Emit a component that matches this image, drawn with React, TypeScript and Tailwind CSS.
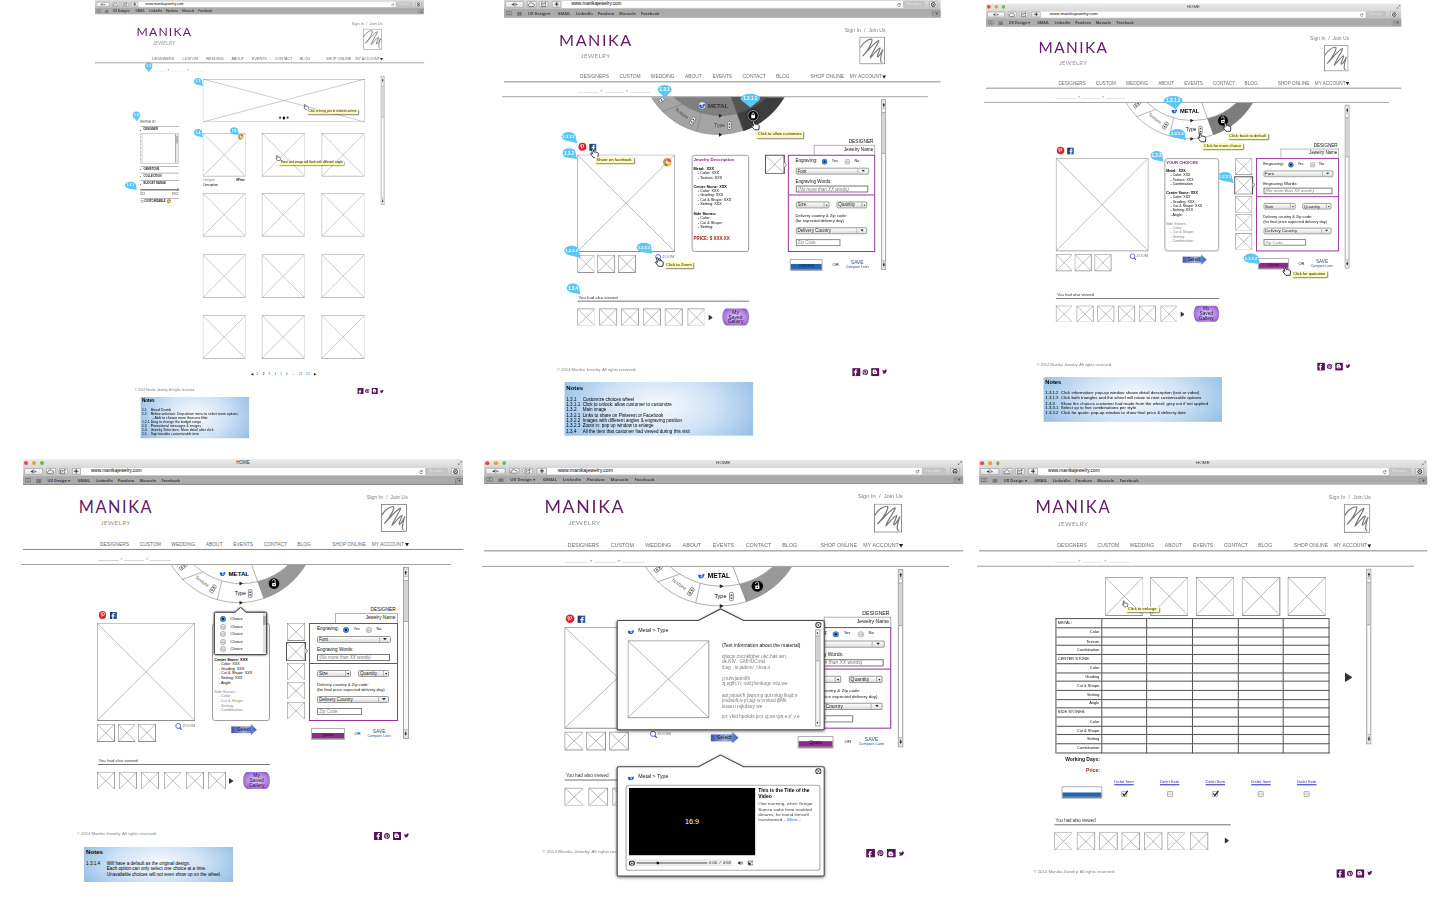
import React from "react";
import {
  FaBloggerB,
  FaFacebookF,
  FaPinterest,
  FaPinterestP,
  FaTwitter,
} from "react-icons/fa";

type Row = [string, string];

/* ---------- small shared drawings ---------- */

function XBox({ className, dark }: { className: string; dark?: boolean }) {
  return (
    <svg className={"shrink-0 " + className} viewBox="0 0 100 100" preserveAspectRatio="none" fill="none">
      <path d="M0 0L100 100M100 0L0 100" stroke="#8e8e8e" strokeWidth="0.6" vectorEffect="non-scaling-stroke" />
      <rect
        width="100"
        height="100"
        stroke={dark ? "#555" : "#8e8e8e"}
        strokeWidth={dark ? 2 : 1.2}
        vectorEffect="non-scaling-stroke"
      />
    </svg>
  );
}

function Play({ className }: { className: string }) {
  return (
    <svg className={"shrink-0 " + className} viewBox="0 0 10 12" preserveAspectRatio="none">
      <path d="M0 0L10 6L0 12Z" fill="#333" />
    </svg>
  );
}

function Wheelie({ className }: { className: string }) {
  return (
    <svg className={"shrink-0 " + className} viewBox="0 0 20 20">
      <circle cx="10" cy="10" r="9.5" fill="#f4e3c4" stroke="#c8b18a" />
      <path d="M10 1A9 9 0 0 1 19 9L13 9.5A4 4 0 0 0 9 6Z" fill="#e2574c" />
      <path d="M19 10A9 9 0 0 1 12 19L10 14A4 4 0 0 0 13.500 10Z" fill="#f0c23c" />
      <path d="M11 19A9 9 0 0 1 2 14L7 12A4 4 0 0 0 10 14Z" fill="#4c9f58" />
      <path d="M1.500 13A9 9 0 0 1 9 1L8.500 6.500A4 4 0 0 0 6.500 11Z" fill="#d8843f" />
    </svg>
  );
}

function BlueMark({ className }: { className: string }) {
  return (
    <svg className={"shrink-0 " + className} viewBox="0 0 12 10">
      <path d="M0 3H4.500L5.500 5.500C6.500 3 8 2.500 11.500 2C11.300 7 8.500 9.500 5.500 9.500C2 9.500 0 7 0 3Z" fill="#1d55d6" />
      <path d="M4.500 6L6 6.500L6.500 4.500L8.500 4.300L7 7.500L5 8Z" fill="#dbe7ff" />
    </svg>
  );
}

/* ---------- browser chrome ---------- */

const toolButton =
  "flex h-[7.6px] items-center justify-center rounded-[1px] border border-[#b5b5b5] bg-gradient-to-b from-[#fafafa] to-[#e2e2e2]";

function Chrome({ titled = true, squeeze = "" }: { titled?: boolean; squeeze?: string }) {
  return (
    <div
      className={
        "h-[25.7px] origin-bottom overflow-hidden rounded-t-[2px] border-b border-[#8d8d8d] bg-gradient-to-b from-[#ececec] via-[#cfcfcf] to-[#b4b4b4] text-[#333] " +
        squeeze
      }
    >
      <div className="flex h-[8px] items-center pl-[1.2px]">
        <div className="flex w-[30px] gap-[3.8px]">
          <i className="size-[3.9px] rounded-full bg-[#e4483f]" />
          <i className="size-[3.9px] rounded-full bg-[#eda032]" />
          <i className="size-[3.9px] rounded-full bg-[#74b341]" />
        </div>
        <div className="w-[377px] text-center text-[4.5px]">{titled && "HOME"}</div>
        <svg className="ml-auto mr-[1.500px] size-[4px]" viewBox="0 0 8 8" fill="none" stroke="#555">
          <path d="M4.500 0.500H7.500V3.500M7.500 0.500L4.500 3.500M3.500 7.500H0.500V4.500M0.500 7.500L3.500 4.500" />
        </svg>
      </div>
      <div className="flex h-[9px] items-center pl-px">
        <div className={toolButton + " w-[18.7px] justify-around"}>
          <svg className="h-[3px] w-[3.4px]" viewBox="0 0 6 6">
            <path d="M6 0L0 3L6 6Z" fill="#444" />
          </svg>
          <i className="h-full w-[0.5px] bg-[#b0b0b0]" />
          <svg className="h-[3px] w-[3.4px]" viewBox="0 0 6 6">
            <path d="M0 0L6 3L0 6Z" fill="#888" />
          </svg>
        </div>
        <div className={toolButton + " ml-[3px] w-[10px]"}>
          <svg className="h-[5.2px] w-[7px] shrink-0" viewBox="0 0 13 9" fill="none" stroke="#333" strokeWidth="1.100">
            <path d="M3 8.500A2.300 2.300 0 0 1 2.500 4A3.500 3.500 0 0 1 9 3A2.800 2.800 0 0 1 10.500 8.500Z" />
          </svg>
        </div>
        <div className={toolButton + " ml-[2.7px] w-[9.6px]"}>
          <svg className="h-[5px] w-[6px] shrink-0" viewBox="0 0 12 10" fill="none" stroke="#333" strokeWidth="1.200">
            <path d="M5 2H1V9.500H9.500V6M4 6.500C4.500 3.500 7 2.500 10.500 2.500M8.500 0.500L11 2.500L8.500 4.500" />
          </svg>
        </div>
        <div className={toolButton + " ml-[3.4px] w-[9.3px]"}>
          <svg className="size-[4.400px] shrink-0" viewBox="0 0 8 8" stroke="#222" strokeWidth="1.600">
            <path d="M4 0V8M0 4H8" />
          </svg>
        </div>
        <div className="flex h-[7.2px] w-[344px] items-center bg-white pl-[10px] pr-[2px] pt-[0.500px]">
          <span className="text-[4.7px] text-black">www.manikajewelry.com</span>
          <svg className="ml-auto size-[4px]" viewBox="0 0 8 8" fill="none" stroke="#333">
            <path d="M6.500 2.500A3 3 0 1 0 7 5M6.800 0.300V2.800H4.500" />
          </svg>
        </div>
        <div className="flex h-[7px] w-[22.7px] items-center justify-center rounded-[1px] bg-[#c4c4c4] text-[4.4px] text-[#e0e0e0]">
          Reader
        </div>
        <div className={toolButton + " ml-[3.6px] w-[9px]"}>
          <svg className="size-[5.200px] shrink-0" viewBox="0 0 10 10" fill="none" stroke="#222">
            <circle cx="5" cy="5" r="3.800" strokeWidth="1.800" />
            <circle cx="5" cy="5" r="0.800" fill="#333" />
          </svg>
        </div>
      </div>
      <div className="flex h-[8.700px] items-center bg-[#ababab] pl-[2px] pt-[0.500px] font-['Open_Sans','Noto_Sans',sans-serif] text-[3.9px] font-bold text-[#444]">
        <svg className="h-[4.4px] w-[6.2px]" viewBox="0 0 12 8" fill="none" stroke="#555">
          <path d="M0.500 0.500H11.500V7.500H0.500ZM6 0.500V7.500" />
        </svg>
        <svg className="ml-[4.800px] h-[4px] w-[5.4px]" viewBox="0 0 12 8" fill="none" stroke="#555">
          <path d="M0 0.700H12M0 3H12M0 5.300H12M0 7.500H12M4 0V8M8 0V8" />
        </svg>
        <span className="ml-[5.800px] w-[30px]">UX Design ▾</span>
        <span className="w-[18.3px]">GMAIL</span>
        <span className="w-[22px]">LinkedIn</span>
        <span className="w-[21.7px]">Pandora</span>
        <span className="w-[22px]">Monocle</span>
        <span>Facebook</span>
        <span className="ml-auto flex h-[6px] w-[8.7px] items-center justify-center rounded-tl-[2px] border-l border-t border-[#888] bg-[#a0a0a0] text-[5px]">
          +
        </span>
      </div>
    </div>
  );
}

/* ---------- site header ---------- */

const nav: Row[] = [
  ["DESIGNERS", "w-[39.7px]"],
  ["CUSTOM", "w-[31.6px]"],
  ["WEDDING", "w-[34.4px]"],
  ["ABOUT", "w-[27.6px]"],
  ["EVENTS", "w-[30.4px]"],
  ["CONTACT", "w-[33.6px]"],
  ["BLOG", "w-[35px]"],
  ["SHOP ONLINE", "w-[39.4px]"],
];

function Header({ rule = true }: { rule?: boolean }) {
  return (
    <>
      <div className="flex h-[54px] justify-between">
        <div className="pl-[55.500px] pt-[14px]">
          <div className="h-[16px] font-['Lato',sans-serif] text-[16.3px] leading-[16px] tracking-[1.55px] text-[#641a66]">
            MANIKA
          </div>
          <div className="mt-[5.400px] pl-[22px] font-['Lato',sans-serif] text-[6.2px] leading-[6.500px] tracking-[0.4px] text-[#8f8f8f]">
            JEWELRY
          </div>
        </div>
        <div className="flex flex-col items-end pr-[56.500px] pt-[10.500px]">
          <div className="-mr-[1px] h-[9px] whitespace-pre text-[5.25px] leading-[5.800px] text-[#808080]">Sign In  /  Join Us</div>
          <svg className="h-[27.8px] w-[26px]" viewBox="0 0 26 28" fill="none" stroke="#77777c">
            <rect x="0.4" y="0.4" width="25.200" height="27.200" strokeWidth="0.8" />
            <path
              d="M1 11C3 7 8 2.500 12 2.500C15 2.500 9 14 3.500 19.500C8 15 15 6 19.500 4C21 4.500 12 17 11 21.500C14 19 18 12.500 21 11.500C21.500 13 17 20 18.500 20.500C20.500 20 23 14.500 23.800 13C22.500 17 21.500 20 21.500 24C21.500 26 22.500 25.500 22.800 26.500"
              strokeWidth="1.150"
              strokeLinejoin="round"
            />
          </svg>
        </div>
      </div>
      <div className="flex h-[11.8px] items-center border-b border-[#8b8b8b] pl-[76.7px] pt-[2.600px] text-[4.95px] text-[#6c6c6c]">
        {nav.map(([label, width]) => (
          <span key={label} className={"whitespace-nowrap " + width}>
            {label}
          </span>
        ))}
        <span className="w-[33px] whitespace-nowrap text-[4.9px]">MY ACCOUNT</span>
        <svg className="-mt-[0.500px] h-[3.400px] w-[4px]" viewBox="0 0 6 5" preserveAspectRatio="none">
          <path d="M0 0H6L3 5Z" fill="#222" />
        </svg>
      </div>
      <div
        className={
          "-ml-[2px] flex h-[14.6px] w-[429.4px] items-center border-b pl-[76.4px] pt-[4px] text-[4px] text-[#777] " +
          (rule ? "border-[#a2a2a2]" : "border-transparent")
        }
      >
        <svg className="mt-[2.600px] h-[1px] w-[21.500px]" viewBox="0 0 21 1" preserveAspectRatio="none">
          <path d="M0 0.500H21" stroke="#aaa" strokeWidth="0.5" />
        </svg>
        <span className="w-[4.700px] text-center">&gt;</span>
        <svg className="mt-[2.600px] h-[1px] w-[20.500px]" viewBox="0 0 21 1" preserveAspectRatio="none">
          <path d="M0 0.500H21" stroke="#aaa" strokeWidth="0.5" />
        </svg>
        <span className="w-[5.500px] text-center">&gt;</span>
        <svg className="mt-[2.600px] h-[1px] w-[21px]" viewBox="0 0 21 1" preserveAspectRatio="none">
          <path d="M0 0.500H21" stroke="#aaa" strokeWidth="0.5" />
        </svg>
      </div>
    </>
  );
}

function Scrollbar({ className = "h-[172px]" }: { className?: string }) {
  return (
    <div className={"mt-[2.4px] flex w-[5.4px] shrink-0 flex-col border border-[#a5a5a5] bg-[#f9f9f9] " + className}>
      <svg className="h-[9px] w-full bg-[#e2e2e2]" viewBox="0 0 5 9" preserveAspectRatio="none">
        <path d="M2.500 2.500L4.300 5H3.100V6.800H1.900V5H0.700Z" fill="#222" />
        <path d="M0 8.700H5" stroke="#888" strokeWidth="0.6" />
      </svg>
      <div className="mt-[2.500px] h-[42.500px] border-y border-[#aaa] bg-[#d4d4d4]" />
      <svg className="mt-auto h-[9px] w-full bg-[#e2e2e2]" viewBox="0 0 5 9" preserveAspectRatio="none">
        <path d="M2.500 6.800L4.300 4.300H3.100V2.500H1.900V4.300H0.700Z" fill="#222" />
        <path d="M0 0.300H5" stroke="#888" strokeWidth="0.6" />
      </svg>
    </div>
  );
}

function Footer({ className }: { className: string }) {
  return (
    <div className={"flex h-[8px] w-[385.600px] items-start pl-[53.400px] " + className}>
      <span className="pt-[0.500px] text-[4.2px] leading-[4.400px] text-[#7e7e7e]">© 2014 Manika Jewelry. All rights reserved.</span>
      <div className="ml-auto flex items-center text-[#581257]">
        <div className="flex size-[8px] items-end justify-end bg-[#581257] pr-[0.8px]">
          <FaFacebookF className="size-[6.500px] text-white" />
        </div>
        <FaPinterest className="ml-[2.600px] size-[6px]" />
        <div className="ml-[2.500px] flex size-[8px] items-center justify-center bg-[#581257]">
          <FaBloggerB className="size-[5.500px] text-white" />
        </div>
        <FaTwitter className="ml-[3px] size-[5px]" />
      </div>
    </div>
  );
}

function Notes({ rows, className, code }: { rows: Row[]; className: string; code: string }) {
  return (
    <div
      className={
        "ml-[61.2px] bg-[radial-gradient(ellipse_60%_110%_at_50%_45%,#f6faff_0%,#cfe2f6_50%,#90bbe5_100%)] pl-[1.600px] pt-[2.600px] text-black " +
        className
      }
    >
      <div className="mb-[5.600px] text-[6.100px] font-bold leading-[6.200px]">Notes</div>
      {rows.map(([id, text], i) => (
        <div key={i} className="flex whitespace-pre text-[4.6px] leading-[5.350px]">
          <span className={"shrink-0 " + code}>{id}</span>
          <span>{text}</span>
        </div>
      ))}
    </div>
  );
}

/* ---------- customize wheel ---------- */

function Stepper({ t }: { t: string }) {
  return (
    <g transform={t}>
      <rect x="-1.800" y="-4" width="3.600" height="8" rx="1" fill="#f2f2f2" stroke="#555" strokeWidth="0.6" />
      <path d="M-1.100 -0.900L0 -2.600L1.100 -0.900ZM-1.100 0.900L0 2.600L1.100 0.900Z" fill="#333" />
    </g>
  );
}

function Wheel({ locked, sector }: { locked?: boolean; sector: string }) {
  const line = { stroke: "#808080", strokeWidth: 0.6, fill: "none" };
  return (
    <svg className="h-[42px] w-[380px]" viewBox="0 105.7 380 42">
      <circle cx="215.500" cy="64.800" r="78.500" {...line} fill={locked ? "#a4a4a4" : "#fff"} />
      <circle cx="218.200" cy="55.600" r="68.700" {...line} fill={locked ? "#7f7f7f" : "#fff"} />
      {locked && <path d="M228.700 105.700L241 140.100A78.500 78.500 0 0 0 282.400 105.700Z" fill="#3d3d3d" />}
      {locked && <path d="M228.700 105.700L234.700 122A68.700 68.700 0 0 0 265.400 105.700Z" fill="#555" />}
      {!locked && (
        <path
          d="M234.700 122.300L241 139.300A78.500 78.500 0 0 0 282.400 105.700L265.400 105.700A68.700 68.700 0 0 1 234.700 122.300Z"
          fill={sector}
        />
      )}
      <path d="M179.500 112.700L159 120.300M198.700 121.500L194.400 140.300M228.700 105.700L234.700 122.300L241 139.300" {...line} />
      <Stepper t="translate(160 107.500) rotate(50)" />
      <Stepper t="translate(190 129.500) rotate(32)" />
      <Stepper t="translate(227.200 134.300)" />
      <g transform="translate(196.600 111.600)">
        {locked && <circle cx="3" cy="2.500" r="3.200" fill="#e6ecf8" />}
        <path d="M0 1.600H2.200L2.800 2.900C3.300 1.600 4 1.300 5.900 1C5.800 3.700 4.300 5.200 2.800 5.200C1 5.200 0 3.600 0 1.600Z" fill="#1d55d6" />
        <path d="M2.300 3.200L3 3.500L3.300 2.400L4.300 2.300L3.600 4L2.500 4.200Z" fill="#dbe7ff" />
      </g>
      <g fontFamily="'Liberation Sans', sans-serif">
        <text x="205.500" y="116.300" fontSize="6.100" fontWeight="700" fill={locked ? "#333" : "#000"}>
          METAL
        </text>
        <text x="211.700" y="135.700" fontSize="5.100" fill={locked ? "#444" : "#000"}>
          Type
        </text>
        <text transform="translate(171.600 118.500) rotate(37)" fontSize="4.900" fill={locked ? "#444" : "#666"}>
          Texture
        </text>
      </g>
      <path d="M216.500 122.300L220 124.300L216.500 126.300ZM216.500 141.500L220 143.500L216.500 145.500Z" fill="#222" />
      <circle cx="251" cy="124.300" r="5.300" fill="#000" stroke={locked ? "#fff" : "none"} strokeWidth="0.7" />
      {locked && <circle cx="251" cy="124.300" r="6" fill="none" stroke="#111" strokeWidth="0.7" />}
      <rect x="249.100" y="123.700" width="3.800" height="3.200" rx="0.4" fill="#fff" />
      <path
        d={locked ? "M249.900 124V122.600A1.100 1.100 0 0 1 252.100 122.600V124" : "M252.200 124V121.800A1.300 1.300 0 0 0 249.600 121.200L249.300 122.100"}
        fill="none"
        stroke="#fff"
        strokeWidth="0.8"
      />
      {!locked && <circle cx="251" cy="125.300" r="0.700" fill="#000" />}
    </svg>
  );
}

/* ---------- form controls ---------- */

function Radio({ on }: { on?: boolean }) {
  return (
    <svg className="size-[6px] shrink-0" viewBox="0 0 12 12">
      <circle cx="6" cy="6" r="5.400" fill={on ? "#4b97ea" : "#e3e3e3"} stroke={on ? "#2f4f8a" : "#8a8a8a"} strokeWidth="1" />
      {on ? <circle cx="6" cy="6" r="2.300" fill="#0b1b3a" /> : <path d="M2 6.500H10" stroke="#aaa" strokeWidth="1.500" />}
    </svg>
  );
}

function Select({ label, className, small }: { label: string; className: string; small?: boolean }) {
  return (
    <div
      className={
        "flex h-[6.800px] items-center rounded-[1.4px] border border-[#9a9a9a] bg-gradient-to-b from-white to-[#dcdcdc] pl-px text-[4.6px] text-[#222] " +
        className
      }
    >
      <span className="h-[5px] leading-[5px]">{label}</span>
      <span
        className={
          "ml-auto flex h-full items-center justify-center border-l border-[#b5b5b5] " + (small ? "w-[4.500px]" : "w-[10.500px]")
        }
      >
        <svg className={small ? "h-[1.800px] w-[2.400px]" : "h-[2.200px] w-[3.800px]"} viewBox="0 0 6 4" preserveAspectRatio="none">
          <path d="M0 0H6L3 4Z" fill="#222" />
        </svg>
      </span>
    </div>
  );
}

function ActionButton({ label, tone, className }: { label?: string; tone: "blue" | "purple"; className: string }) {
  return (
    <div className={"flex shrink-0 flex-col justify-end rounded-[0.8px] border border-[#b0b0b0] bg-white " + className}>
      <div
        className={
          "flex h-[5.400px] items-center justify-center border-b border-[#8a8a8a] text-[4.300px] leading-[4px] " +
          (tone === "blue" ? "bg-[#2464b4] text-[#13294a]" : "bg-[#93288f] text-[#2a062c]")
        }
      >
        {label}
      </div>
    </div>
  );
}

function Order({ locked }: { locked?: boolean }) {
  return (
    <div className="ml-[3px] w-[88.7px]">
      <div className="h-[6.300px] pr-[2px] text-right text-[4.800px] leading-[5px]">DESIGNER</div>
      <div className="ml-[26px] flex h-[9.700px] items-center justify-end border-x border-t border-[#b5b5b5] pr-[1.300px] text-[4.7px]">
        Jewelry Name
      </div>
      <div className="h-[97.600px] border border-[#97319b] pl-[7px]">
        <div className="-ml-[7px] h-[39.600px] border-b border-[#97319b] pl-[7px] pt-[2.100px]">
          <div className="flex h-[7px] items-center">
            <span className="w-[26.200px] text-[4.600px]">Engraving:</span>
            <Radio on />
            <span className="ml-[4.400px] w-[12.500px] text-[3.800px]">Yes</span>
            <Radio />
            <span className="ml-[4.400px] text-[3.800px]">No</span>
          </div>
          <Select label="Font" className="mt-[2.700px] w-[74px]" />
          <div className="mt-[4px] text-[4.600px] leading-[5px]">Engraving Words:</div>
          <div className="mt-[2.100px] flex h-[7px] w-[73.300px] items-center border border-[#777] pl-[1.500px] text-[4.550px] text-[#777]">
            <span className="h-[5px] italic leading-[5px]">(No more than XX words)</span>
          </div>
        </div>
        <div className="flex pt-[6.700px]">
          <Select small label="Size" className="w-[34px]" />
          <Select small label="Quantity" className="ml-[7px] w-[31px]" />
        </div>
        <div className="mt-[5px] whitespace-nowrap text-[4.150px] leading-[5px]">
          Delivery country &amp; Zip code:
          <br />
          {locked ? "(for expected delivery day)" : "(for final price expected delivery day)"}
        </div>
        <Select label="Delivery Country" className="mt-[3.900px] w-[72.500px]" />
        <div className="mt-[5.100px] flex h-[7px] w-[45px] items-center border border-[#888] pl-[1.300px] text-[4.500px] text-[#888]">
          <span className="h-[5px] leading-[5px]">Zip Code</span>
        </div>
      </div>
      <div className="mt-[7px] flex items-center pl-[2.300px]">
        <ActionButton label={locked ? "ORDER" : "Quote"} tone={locked ? "blue" : "purple"} className="h-[12px] w-[33.500px]" />
        <span className="ml-[9.500px] text-[4.200px]">OR</span>
        <div className="ml-[7px] text-center text-[#1f5299]">
          <div className="text-[4.900px] leading-[5.200px]">SAVE</div>
          <div className="whitespace-nowrap text-[3.500px] leading-[4.200px]">Compare Later</div>
        </div>
      </div>
    </div>
  );
}

/* ---------- product page ---------- */

type Cover = "none" | "top" | "all";

const lockedSpec = ["Metal:  XXX", "-Color: XXX", "-Texture: XXX", "", "Center Stone: XXX", "-Color: XXX", "-Grading: XXX", "-Cut & Shape: XXX", "-Setting: XXX", "", "Side Stones:", "-Color:", "-Cut & Shape:", "-Setting:"];
const choiceSpec = ["Metal:  XXX", "-Color: XXX", "-Texture: XXX", "-Combination", "", "Center Stone: XXX", "-Color: XXX", "-Grading: XXX", "-Cut & Shape: XXX", "-Setting: XXX", "-Angle:", "", "Side Stones:", "-Color:", "-Cut & Shape:", "-Setting:", "-Combination:"];

/* Lines that lie behind an open popup are left blank. */
function Description({ locked, cover }: { locked?: boolean; cover: Cover }) {
  const lines = locked ? lockedSpec : choiceSpec;
  return (
    <div className="h-[97.600px] rounded-[3px] border border-[#9c9c9c] pl-[0.900px] pt-[1.300px]">
      <div className="h-[5px] whitespace-nowrap text-[4.350px] font-bold leading-[5px] text-[#8f2393]">
        {cover === "none" && (locked ? "Jewelry Description" : "YOUR CHOICES")}
      </div>
      <div className="mt-[4.200px]">
        {lines.map((line, i) => {
          const sub = line.startsWith("-");
          const grey = !locked && i > 11;
          const shown = cover === "none" || (cover === "top" && i > 4);
          return (
            <div
              key={i}
              className={
                "h-[4.620px] whitespace-pre text-[3.800px] leading-[4.620px] " +
                (sub ? "pl-[4.600px] " : grey ? "" : "font-bold ") +
                (grey ? "text-[#858585]" : "text-black")
              }
            >
              {shown && (sub ? "- " + line.slice(1) : line)}
            </div>
          );
        })}
      </div>
      {locked && <div className="mt-[6.300px] text-[4.500px] font-bold leading-[5px] text-[#b01818]">PRICE: $ XXX.XX</div>}
    </div>
  );
}

function Viewed({ count, className, half }: { count: number; className: string; half?: boolean }) {
  return (
    <div className={className}>
      <div className="ml-[74.400px] h-[6.400px] w-[172.300px] border-b border-[#777] pl-[0.800px] text-[4.300px] leading-[5px] text-[#333]">
        You had also viewed
      </div>
      <div className="mt-[6.800px] flex items-center pl-[73.700px]">
        <div className="flex gap-[4.400px]">
          {Array.from({ length: count }, (_, i) => (
            <XBox key={i} className="h-[17.500px] w-[17.800px]" />
          ))}
        </div>
        {half ? null : count === 6 ? (
          <>
            <Play className="ml-[3.300px] h-[6px] w-[4.600px]" />
            <div className="ml-[9.500px] flex h-[17.800px] w-[27px] flex-col items-center rounded-[4.500px/8.500px] bg-[radial-gradient(ellipse_at_50%_50%,#d6bdf4_15%,#a470d8_70%,#6c35a6_100%)] pt-[0.900px] text-[5px] leading-[5.300px] text-[#241038]">
              <span>My</span>
              <span>Saved</span>
              <span>Gallery</span>
            </div>
          </>
        ) : (
          <Play className="ml-[16px] h-[6px] w-[4.800px]" />
        )}
      </div>
    </div>
  );
}

type ProductProps = {
  locked?: boolean;
  titled?: boolean;
  squeeze?: string;
  sector?: string;
  late?: boolean;
  cover?: Cover;
  children?: React.ReactNode;
};

function Product({ locked, titled, squeeze, sector = "#989898", late, cover = "none", children }: ProductProps) {
  return (
    <>
      <Chrome titled={titled} squeeze={squeeze} />
      <Header />
      <div className="flex h-[176.200px] items-start">
        <div className="w-[380px]">
          <Wheel locked={locked} sector={sector} />
          <div className="flex pl-[73.700px]">
            <div className="w-[98px]">
              <div className="flex h-[16px] items-center pl-[1.600px]">
                <div className="flex size-[7.600px] items-center justify-center rounded-full bg-[#d8232a]">
                  <FaPinterestP className="size-[5.400px] text-white" />
                </div>
                <div className="ml-[3.600px] flex size-[7px] items-end justify-end bg-gradient-to-r from-[#1d3567] to-[#3d62a8] pr-[0.600px]">
                  <FaFacebookF className="size-[6px] text-white" />
                </div>
              </div>
              <XBox className="h-[97.600px] w-[98px]" />
              <div className="mt-[3.400px] flex items-start gap-[2.900px]">
                <XBox className="h-[17.600px] w-[17.700px]" />
                <XBox className="h-[17.600px] w-[17.700px]" />
                <XBox className="h-[17.600px] w-[17.700px]" />
                <div className="-mt-[1.200px] ml-auto flex items-center text-[4.200px] text-[#777]">
                  <svg className="mr-[0.600px] size-[7px]" viewBox="0 0 13 13" fill="none" stroke="#3338d8">
                    <circle cx="6" cy="5.500" r="4.600" strokeWidth="1.400" />
                    <path d="M9 9L12.500 12.500" strokeWidth="2" />
                  </svg>
                  ZOOM
                </div>
              </div>
            </div>
            <div className="ml-[17.300px] w-[57.700px] pt-[16px]">
              <Description locked={locked} cover={cover} />
              {!locked && (
                <div className="relative ml-[18.700px] mt-[3.300px] flex h-[11.500px] w-[26px] items-center pl-[6px] pt-[0.600px] text-[4.900px]">
                  <svg className="absolute inset-0 size-full" viewBox="0 0 26 11.500">
                    <defs>
                      <linearGradient id="arrow">
                        <stop offset="0" stopColor="#3a4fae" />
                        <stop offset="0.500" stopColor="#9db4e6" />
                        <stop offset="1" stopColor="#3a5cc0" />
                      </linearGradient>
                    </defs>
                    <path d="M0.300 2.500H20V0.400L25.700 5.700L20 11V9H0.300Z" fill="url(#arrow)" stroke="#6a7fc8" strokeWidth="0.300" />
                  </svg>
                  <span className="relative">Select</span>
                </div>
              )}
            </div>
            <div className="ml-[16.300px] flex w-[19.700px] flex-col items-center pt-[16px]">
              {!locked && <XBox className="mb-[1.200px] h-[17.500px] w-[18px]" />}
              <div className="relative">
                <XBox dark className="h-[19.300px] w-[19.700px]" />
                <svg className="absolute -right-[2.400px] top-[6.600px] h-[6px] w-[3px]" viewBox="0 0 3 6">
                  <path d="M0.300 0.200L2.700 3L0.300 5.800" fill="#fff" stroke="#555" strokeWidth="0.700" />
                </svg>
              </div>
              {!locked && (
                <>
                  <XBox className="mt-[1.500px] h-[17.500px] w-[18px]" />
                  <XBox className="mt-[1.600px] h-[17.500px] w-[18px]" />
                  <XBox className="mt-[2.700px] h-[17.500px] w-[18px]" />
                </>
              )}
            </div>
            <Order locked={locked} />
          </div>
        </div>
        <Scrollbar />
      </div>
      <Viewed count={cover === "all" ? 3 : 6} half={cover === "all"} className={late ? "mt-[23.200px]" : "mt-[17.200px]"} />
      <Footer className="mt-[42.200px]" />
      {children}
    </>
  );
}

/* ---------- popups over a product page ---------- */

function Close() {
  return (
    <svg className="size-[6.200px]" viewBox="0 0 10 10" fill="none" stroke="#333">
      <circle cx="5" cy="5" r="4" strokeWidth="1.500" fill="#fff" />
      <path d="M3.500 3.500L6.500 6.500M6.500 3.500L3.500 6.500" strokeWidth="1.300" />
    </svg>
  );
}

function Popup({ className, children }: { className: string; children: React.ReactNode }) {
  return (
    <div className={"absolute left-[121.800px] w-[190.700px] " + className}>
      <svg className="absolute inset-x-0 top-0 h-[117.500px] w-full overflow-visible drop-shadow-[0_1px_1.500px_rgba(0,0,0,0.6)]" viewBox="0 0 190.700 117.500">
        <path
          d="M1.500 11.600H75L95.200 0.500L116.300 11.600H189.200Q190.400 11.600 190.400 12.800V115.900Q190.400 117.100 189.200 117.100H1.500Q0.300 117.100 0.300 115.900V12.800Q0.300 11.600 1.500 11.600Z"
          fill="#fff"
          stroke="#4a4a4a"
          strokeWidth="1"
        />
      </svg>
      <div className="relative h-[117px] pt-[12.800px]">{children}</div>
    </div>
  );
}

function PopupTitle() {
  return (
    <div className="flex items-start justify-between pl-[10.500px] pr-[2.300px]">
      <div className="flex items-center pt-[7.300px] text-[4.850px]">
        <BlueMark className="mr-[3.300px] h-[5px] w-[6px]" />
        Metal &gt; Type
      </div>
      <Close />
    </div>
  );
}

const filler = ["djiocjn,zxcnkfgher ukc.has am,", "dk.KIV.  GMHUCmkl", "il;ag  ;io.jadvm/ ,l;ksa.n", "", "j;nuhvjaomlfb", "zj;ogfh,'n; mkl;jfvmkogv mlu;we", "", "aoi;jvjouk'h jiwpur;g qui;mktg lksjd;n", "jmdisofi;iv jrl;agl w;vmksd jl|Mk", "kusa.n mjkdsuy we", "", "joi; vkid hpokds jo;s cj;oa vjoi;e p',v.e"];

function TextPopup() {
  return (
    <Popup className="top-[146.200px]">
      <PopupTitle />
      <div className="flex pl-[10.700px] pt-[6.200px]">
        <XBox className="h-[74.600px] w-[74.700px]" />
        <div className="ml-[11.300px] w-[84px] pt-[1.600px]">
          <div className="mb-[5.200px] whitespace-nowrap text-[4.500px] leading-[5.350px]">(Text information about the material)</div>
          {filler.map((t, i) => (
            <div key={i} className="h-[5.350px] whitespace-pre text-[4.400px] leading-[5.350px] text-[#7c7c7c]">
              {t}
            </div>
          ))}
        </div>
        <div className="-mt-[11px] ml-[1.800px] flex h-[94px] w-[4.300px] flex-col border border-[#b0b0b0] bg-[#f4f4f4]">
          <svg className="h-[5px] w-full" viewBox="0 0 4 5" preserveAspectRatio="none"><path d="M0.500 3.500L2 1.500L3.500 3.500Z" fill="#222" /></svg>
          <div className="h-[24.500px] border-y border-[#aaa] bg-[#cfcfcf]" />
          <svg className="mt-auto h-[5px] w-full" viewBox="0 0 4 5" preserveAspectRatio="none"><path d="M0.500 1.500L2 3.500L3.500 1.500Z" fill="#222" /></svg>
        </div>
      </div>
    </Popup>
  );
}

function VideoPopup() {
  return (
    <Popup className="top-[287.300px]">
      <PopupTitle />
      <div className="ml-[8px] mt-[3.200px] flex h-[83px] w-[179.300px] rounded-[3px] border border-[#aaa] pl-[2.300px] pt-[2.700px]">
        <div className="w-[116px]">
          <div className="flex h-[65.200px] items-center justify-center bg-black text-[6.600px] text-white">16:9</div>
          <div className="mt-[3.300px] flex h-[7.600px] items-center">
            <div className="flex h-full w-[95px] items-center rounded-full bg-[#ececec] text-[3.800px] text-[#333]">
              <svg className="size-[5.600px] shrink-0" viewBox="0 0 10 10">
                <circle cx="5" cy="5" r="4" fill="#fff" stroke="#222" strokeWidth="2" />
                <path d="M4 3L7 5L4 7Z" fill="#222" />
              </svg>
              <svg className="ml-px h-[3px] w-[65.500px] shrink-0" viewBox="0 0 65.500 3">
                <path d="M0 1.500H65.500" stroke="#444" strokeWidth="0.900" />
                <rect x="18.500" y="0.200" width="2.200" height="2.600" fill="#111" />
              </svg>
              <span className="ml-[1.500px] whitespace-nowrap">0:00 &nbsp;/ &nbsp;4:68</span>
            </div>
            <svg className="ml-[5px] h-[5px] w-[5.600px]" viewBox="0 0 11 10" fill="none" stroke="#333">
              <path d="M0 3.500H2L5 1V9L2 6.500H0Z" fill="#333" stroke="none" />
              <path d="M6.500 3.500Q7.500 5 6.500 6.500M8 2Q10.500 5 8 8" />
            </svg>
            <svg className="ml-[3.200px] h-[5px] w-[5.600px]" viewBox="0 0 11 10" fill="none" stroke="#222" strokeWidth="1.400">
              <rect x="0.800" y="1" width="9.400" height="8" />
              <path d="M1 5H5V9Z" fill="#222" />
              <path d="M6.500 4L9 2" />
            </svg>
          </div>
        </div>
        <div className="ml-[2.700px] text-[4.150px] leading-[5.250px] text-[#444]">
          <div className="mb-[0.600px] text-[4.600px] font-bold leading-[5.900px] text-black">
            This is the Title of the
            <br />
            Video
          </div>
          One morning, when Gregor
          <br />
          Samsa woke from troubled
          <br />
          dreams, he found himself
          <br />
          transformed... <span className="text-[#1565d8]">More...</span>
        </div>
      </div>
    </Popup>
  );
}

function ChoicePopup() {
  return (
    <div className="absolute left-[190.700px] top-[147.800px] w-[53px]">
      <svg className="absolute inset-0 h-[48px] w-[53px] overflow-visible drop-shadow-[0_0.800px_1px_rgba(0,0,0,0.7)]" viewBox="0 0 53 48">
        <path
          d="M1.500 5.300H21L26.500 0.500L32 5.300H51.500Q52.600 5.300 52.600 6.400V46.500Q52.600 47.600 51.500 47.600H1.500Q0.400 47.600 0.400 46.500V6.400Q0.400 5.300 1.500 5.300Z"
          fill="#fff"
          stroke="#444"
        />
      </svg>
      <div className="relative flex h-[48px] pl-[6.200px] pt-[8.300px]">
        <div className="flex flex-col">
          {[0, 1, 2, 3, 4].map((n) => (
            <div key={n} className="flex h-[7.650px] items-center gap-[4.200px] text-[4px]">
              <Radio on={n === 0} />
              Choice
            </div>
          ))}
        </div>
        <div className="-mt-[1.800px] ml-auto mr-[1px] h-[40px] w-[3.400px] bg-[#dedede] pt-[3px]">
          <div className="h-[9px] bg-[#a9a9a9]" />
        </div>
      </div>
    </div>
  );
}

/* ---------- catalogue page ---------- */

function Filter({ mark, label, className }: { mark: string; label: string; className: string }) {
  return (
    <div className={"flex items-center border-t border-[#a0a0a0] text-[3.700px] font-bold text-[#222] " + className}>
      <span className="w-[4.300px] text-[3px]">{mark}</span>
      {label}
    </div>
  );
}

const pages: Row[] = [
  ["◀", "text-black"],
  ["1", "text-[#2b7fd0]"],
  ["2", "text-black"],
  ["3", "text-[#2b7fd0]"],
  ["4", "text-[#2b7fd0]"],
  ["5", "text-[#2b7fd0]"],
  ["6", "text-[#2b7fd0]"],
  ["...", "text-[#2b7fd0]"],
  ["21", "text-[#2b7fd0]"],
  ["22", "text-[#2b7fd0]"],
  ["▶", "text-black"],
];

function CardRow({ className }: { className: string }) {
  return (
    <div className={"flex " + className}>
      <XBox className="h-[57.800px] w-[57.500px]" />
      <XBox className="ml-[21.400px] h-[57.800px] w-[57.500px]" />
      <XBox className="ml-[22.700px] h-[57.800px] w-[57.500px]" />
    </div>
  );
}

function Catalogue() {
  return (
    <>
      <Chrome titled={false} />
      <Header rule={false} />
      <div className="flex h-[393.500px] items-start">
        <div className="ml-[60.600px] w-[51px] pt-[60px] text-[#333]">
          <div className="h-[8.700px] text-[4px] leading-[6px] text-[#555]">REFINE BY</div>
          <Filter mark="▴" label="DESIGNER" className="h-[9.700px]" />
          <div className="flex h-[40.600px] justify-between border border-[#c0c0c0]">
            <svg className="-ml-[2px] h-full w-[4px]" viewBox="0 0 4 40" preserveAspectRatio="none" fill="#fff" stroke="#aaa" strokeWidth="0.5">
              {[0, 1, 2, 3, 4, 5, 6, 7].map((n) => (
                <rect key={n} x="0.500" y={0.6 + n * 4.95} width="3" height="3.600" />
              ))}
            </svg>
            <div className="w-[4px] border-l border-[#999] bg-[#e6e6e6] pt-[3px]">
              <div className="h-[10px] bg-[#b8b8b8]" />
            </div>
          </div>
          <Filter mark="▾" label="GEMSTONE" className="mt-[3px] h-[8.600px]" />
          <Filter mark="▴" label="COLLECTION" className="h-[10.700px]" />
          <Filter mark="▾" label="BUDGET RANGE" className="h-[9px]" />
          <div className="mt-[1.400px] flex h-[3.600px] items-center justify-between bg-[linear-gradient(#555,#555)] bg-[length:100%_1.500px] bg-center bg-no-repeat">
            <i className="h-full w-[1.500px] bg-[#7a7350]" />
            <i className="h-full w-[1.500px] bg-[#7a7350]" />
          </div>
          <div className="mt-[2.500px] flex h-[7px] justify-between text-[3.400px] text-[#555]">
            <span>$XX</span>
            <span>$XXX</span>
          </div>
          <div className="flex h-[8px] items-center border-t border-[#a0a0a0] text-[3.600px] font-bold text-[#222]">
            <svg className="mr-[1.300px] size-[4px]" viewBox="0 0 8 8">
              <rect x="1" y="1" width="6" height="6" fill="#fff" stroke="#333" />
            </svg>
            CUSTOMIZABLE
            <Wheelie className="ml-[1.600px] size-[6px]" />
          </div>
        </div>
        <div className="ml-[32.300px] w-[217.100px] pt-[5.800px]">
          <div className="relative">
            <XBox className="h-[57.300px] w-[217.100px]" />
            <div className="absolute bottom-[3.500px] left-[102.300px] flex items-center gap-[1.700px]">
              <i className="size-[2.800px] rounded-full bg-[#444]" />
              <i className="size-[3.600px] rounded-full bg-black" />
              <i className="size-[2.800px] rounded-full bg-[#444]" />
            </div>
          </div>
          <div className="relative mt-[14.600px]">
            <CardRow className="" />
            <Wheelie className="absolute left-[47.500px] top-[1.500px] size-[8px]" />
          </div>
          <div className="flex h-[22.200px] w-[57.500px] justify-between pl-px pr-px pt-[2.500px] text-[3.900px] leading-[5.800px]">
            <div>
              <div className="text-[#777]">Designer</div>
              <div className="text-black">Description</div>
            </div>
            <span className="font-bold italic">$Price</span>
          </div>
          <CardRow className="" />
          <CardRow className="mt-[24.900px]" />
          <CardRow className="mt-[22.700px]" />
          <div className="ml-[64px] mt-[18px] flex h-[5px] w-[88px] items-center justify-between text-[4.300px]">
            {pages.map(([label, tone]) => (
              <span key={label} className={tone}>
                {label}
              </span>
            ))}
          </div>
        </div>
        <div className="ml-[20.800px]">
          <Scrollbar />
        </div>
      </div>
      <Footer className="mt-[24.500px]" />
      <Notes
        className="mt-[3.700px] h-[55px] w-[144.400px]"
        code="w-[11.600px]"
        rows={[
          ["1.1", "Bread Crumb"],
          ["1.2", "Refine selection: Drop-down menu to select more options"],
          ["", "  - Able to choose more than one filter"],
          ["1.2.1", "Drag to change the budget range"],
          ["1.3", "Promotional messages & images"],
          ["1.4", "Jewelry Selections: More detail after click"],
          ["1.5", "Sign besides customizable item"],
        ]}
      />
    </>
  );
}

/* ---------- comparison page ---------- */

const attributes = ["METAL:", "Color", "Texture", "Combination", "CENTER STONE:", "Color", "Grading", "Cut & Shape", "Setting", "Angle", "SIDE STONES:", "Color", "Cut & Shape", "Setting", "Combination"];

function Compare() {
  return (
    <>
      <Chrome squeeze="scale-y-[0.95]" />
      <Header />
      <div className="flex h-[241px] items-start">
        <div className="w-[344px] pt-[10px]">
          <div className="flex pl-[123.600px]">
            <XBox className="h-[37.500px] w-[37.300px]" />
            <XBox className="ml-[7.200px] h-[37.500px] w-[37.300px]" />
            <XBox className="ml-[7.200px] h-[37.500px] w-[37.300px]" />
            <XBox className="ml-[8.500px] h-[37.500px] w-[37.300px]" />
            <XBox className="ml-[6.900px] h-[37.500px] w-[37.300px]" />
          </div>
          <div className="ml-[74.900px] mt-[2.800px] grid w-[269.200px] grid-cols-6 border-l border-t border-[#555] text-[3.900px]">
            {attributes.map((name, i) => (
              <React.Fragment key={i}>
                <div
                  className={
                    "flex h-[8.700px] items-center border-b border-r border-[#555] px-[1.500px] " +
                    (name === name.toUpperCase() ? "justify-start" : "justify-end")
                  }
                >
                  {name}
                </div>
                {[0, 1, 2, 3, 4].map((c) => (
                  <div key={c} className="h-[8.700px] border-b border-r border-[#555]" />
                ))}
              </React.Fragment>
            ))}
          </div>
          <div className="w-[118.700px] pt-[3.400px] text-right text-[4.900px] font-bold leading-[6px]">Working Days:</div>
          <div className="w-[118.700px] pt-[4.800px] text-right text-[4.900px] font-bold leading-[6px] text-[#a32020]">Price:</div>
          <div className="flex pt-[5px]">
            <ActionButton tone="blue" className="ml-[80.500px] mt-[7.600px] h-[11.800px] w-[40.800px]" />
            <div className="ml-[-1.400px] grid w-[224.500px] grid-cols-5">
              {[true, false, true, false, false].map((on, i) => (
                <div key={i} className="flex flex-col items-center">
                  <span className="whitespace-nowrap text-[4.200px] leading-[5px] text-[#2a2ab8] underline decoration-[0.500px]">Delet Item</span>
                  <svg className="mt-[6.500px] size-[7px] overflow-visible" viewBox="0 0 14 14" fill="none">
                    <rect x="2" y="2" width="10" height="10" rx="1" fill="#eee" stroke="#777" />
                    {on ? <path d="M4 6L7 10L14 1" stroke="#111" strokeWidth="2.200" /> : <path d="M3 7H11" stroke="#aaa" />}
                  </svg>
                </div>
              ))}
            </div>
          </div>
        </div>
        <Play className="ml-[14.500px] mt-[102.500px] h-[9.600px] w-[7.800px]" />
        <div className="ml-[13.500px]">
          <Scrollbar className="h-[170.500px]" />
        </div>
      </div>
      <Viewed count={7} className="mt-[4.300px]" />
      <Footer className="mt-[18.500px]" />
    </>
  );
}

/* ---------- annotations on the canvas ---------- */

type Pin = [string, number, number, number, number, number, number];

/* label, centre x, centre y, radius x, radius y, tip x, tip y */
const pins: Pin[] = [
  ["1.1", 148.700, 66, 3.700, 3.600, 148.700, 72.300],
  ["1.3", 198, 81.300, 4, 3.400, 203, 86],
  ["1.2", 136.300, 115, 3.700, 3.600, 137, 121.300],
  ["1.4", 198, 132.600, 4, 3.500, 203, 137.500],
  ["1.5", 234, 130.800, 4, 3.500, 239, 135],
  ["1.2.1", 130.500, 185.300, 5.600, 3.500, 136.800, 190],
  ["1.3.1", 664.700, 89.500, 7, 4.600, 665, 98],
  ["1.3.1.1", 750.300, 98.500, 9.800, 4.700, 750.500, 107.500],
  ["1.3.2.1", 568.600, 136.500, 7, 4.600, 577.300, 143.300],
  ["1.3.2", 569, 153, 6.500, 4.800, 577.300, 159.300],
  ["1.3.2.2", 571.700, 250.600, 7.400, 4.800, 580.300, 258],
  ["1.3.2.3", 644, 247.500, 7.400, 4.800, 652, 253.800],
  ["1.3.4", 573, 288, 6.400, 4.600, 580.300, 294.500],
  ["1.3.1.2", 1173.300, 100.300, 9.500, 4.300, 1175.700, 109.300],
  ["1.3.1.3", 1177.300, 133.500, 7.600, 4.600, 1186, 140],
  ["1.3.3", 1156.500, 155.600, 6, 4.600, 1163.500, 161.800],
  ["1.3.3.1", 1225, 176.500, 6.800, 4.600, 1233.700, 182.900],
  ["1.3.3.2", 1251, 258.200, 7.400, 4.600, 1260.200, 264.300],
];

/* x, y, scale of each hand pointer */
const hands: [number, number, number][] = [
  [303.500, 104, 0.600],
  [275.500, 155, 0.600],
  [751, 120.500, 1],
  [590, 148.300, 1],
  [655, 257, 1],
  [1222.500, 122, 1],
  [1197.500, 132.500, 1],
  [1282.300, 266, 1],
  [1122, 600.500, 0.700],
];

function Annotations() {
  return (
    <svg className="pointer-events-none absolute inset-0 h-[900px] w-[1440px]" viewBox="0 0 1440 900">
      {pins.map(([label, x, y, rx, ry, tx, ty]) => {
        const dx = tx - x;
        const down = Math.abs(dx) < 3;
        const a = down ? [x - rx * 0.85, y + ry * 0.5] : [x - rx * 0.2, y + ry * 0.95];
        const b = down ? [x + rx * 0.85, y + ry * 0.5] : [x + rx * 0.95, y - ry * 0.2];
        const long = label.length > 6 && rx < 8;
        return (
          <g key={label}>
            <ellipse cx={x} cy={y} rx={rx} ry={ry} fill="#5cc6f5" />
            <path d={`M${a[0]} ${a[1]}L${tx} ${ty}L${b[0]} ${b[1]}Z`} fill="#5cc6f5" />
            <text
              x={x}
              y={y + (rx < 6 ? 1.100 : 1.700)}
              textAnchor="middle"
              fontFamily="'Liberation Sans', sans-serif"
              fontSize={rx < 6 ? 3.300 : long ? 4.100 : 4.600}
              fontWeight="700"
              fill="#fff"
            >
              {label}
            </text>
          </g>
        );
      })}
      {hands.map(([x, y, s], i) => (
        <path
          key={i}
          transform={`translate(${x} ${y}) scale(${s})`}
          d="M1.500 0.800Q2.400 0 3 1L4 3.800L5.200 3.600L6.300 3.900L7.500 4.200Q8.400 4.800 8.300 6L7.800 9.300H3.600L1.600 7L0.500 5Q0.800 4 2 5L2.500 5.400Z"
          fill="#fff"
          stroke="#222"
          strokeWidth="0.900"
        />
      ))}
    </svg>
  );
}

const tips: Row[] = [
  ["Click to bring you to related content.", "left-[307px] top-[109.300px] h-[4.400px] w-[51px] text-[3.050px]"],
  ["Point and image will flash with different angle.", "left-[279.300px] top-[160.500px] h-[4.400px] w-[65px] text-[3.100px]"],
  ["Click to allow customize", "left-[756.300px] top-[131.300px] h-[6.300px] w-[46.500px] text-[4.150px]"],
  ["Share on facebook", "left-[595px] top-[157.200px] h-[6.300px] w-[38.500px] text-[4.200px]"],
  ["Click to Zoom", "left-[664.600px] top-[261.800px] h-[6.300px] w-[28px] text-[4.200px]"],
  ["Click: back to default", "left-[1227.600px] top-[132.500px] h-[6px] w-[40.500px] text-[4px]"],
  ["Click for more choice", "left-[1202.300px] top-[142.700px] h-[6px] w-[40.500px] text-[4px]"],
  ["Click for quotation", "left-[1291.600px] top-[271px] h-[6px] w-[35px] text-[4px]"],
  ["Click to enlarge", "left-[1126.200px] top-[607px] h-[5px] w-[32.500px] text-[4.200px]"],
];

const board = "absolute w-[440px] origin-top-left ";

export default function App() {
  return (
    <div className="relative h-[900px] w-[1440px] overflow-hidden bg-white font-['Liberation_Sans',Arial,sans-serif] leading-none text-[#111]">
      <section className={board + "left-[94.700px] top-[-4.600px] [transform:scale(0.748,0.75)]"}>
        <Catalogue />
      </section>

      <section className={board + "left-[504px] top-[-7.800px] [transform:scale(0.9925,0.9925)]"}>
        <Product locked late titled={false}>
          <Wheelie className="absolute left-[160px] top-[166.500px] size-[9px]" />
          <Notes
            className="mt-[6.700px] h-[54px] w-[189.400px]"
            code="w-[16.500px]"
            rows={[
              ["1.3.1", "Customize choices wheel"],
              ["1.3.1.1", "Click to unlock: allow customer to customize"],
              ["1.3.2", "Main image"],
              ["1.3.2.1", "Links to share on Pinterest or Facebook"],
              ["1.3.2.2", "Images with different angles & engraving position"],
              ["1.3.2.3", "Zoom in: pop up window to enlarge"],
              ["1.3.4", "All the item that customer had viewed during this visit"],
            ]}
          />
        </Product>
      </section>

      <section className={board + "left-[986px] top-[2.300px] [transform:scale(0.944,0.952)]"}>
        <Product late sector="#7d7d7d" squeeze="scale-y-[0.95]">
          <Notes
            className="mt-[7px] h-[47.600px] w-[189.300px]"
            code="w-[16.500px]"
            rows={[
              ["1.3.1.2", "Click information: pop-up window shows detail description (text or video)"],
              ["1.3.1.3", "Click both triangles and the wheel will rotate to next customizable options"],
              ["1.3.3", "Show the choices customer had made from the wheel; grey out if not applied"],
              ["1.3.3.1", "Select up to five combinations per style"],
              ["1.3.3.2", "Click for quote: pop-up window to show final price & delivery date"],
            ]}
          />
        </Product>
      </section>

      <section className={board + "left-[23.300px] top-[459px]"}>
        <Product cover="top">
          <ChoicePopup />
          <Notes
            className="mt-[7px] h-[35.700px] w-[149px]"
            code="w-[20.700px]"
            rows={[
              ["1.3.1.4", "Will have a default as the original design."],
              ["", "Each option can only select one choice at a time."],
              ["", "Unavailable choices will not even show up on the wheel."],
            ]}
          />
        </Product>
      </section>

      <section className={board + "left-[484px] top-[457.400px] [transform:scale(1.089,1.037)]"}>
        <Product late cover="all" squeeze="scale-y-[0.911]">
          <TextPopup />
          <VideoPopup />
        </Product>
      </section>

      <section className={board + "left-[979px] top-[458.400px] [transform:scale(1.019,1.026)]"}>
        <Compare />
      </section>

      <Annotations />
      {tips.map(([text, place]) => (
        <div
          key={text}
          className={
            "absolute flex items-center whitespace-nowrap bg-[#fdfbb4] pl-[1.500px] text-[#222] shadow-[0.5px_0.8px_1.2px_rgba(0,0,0,0.5)] " + place
          }
        >
          {text}
        </div>
      ))}
    </div>
  );
}
